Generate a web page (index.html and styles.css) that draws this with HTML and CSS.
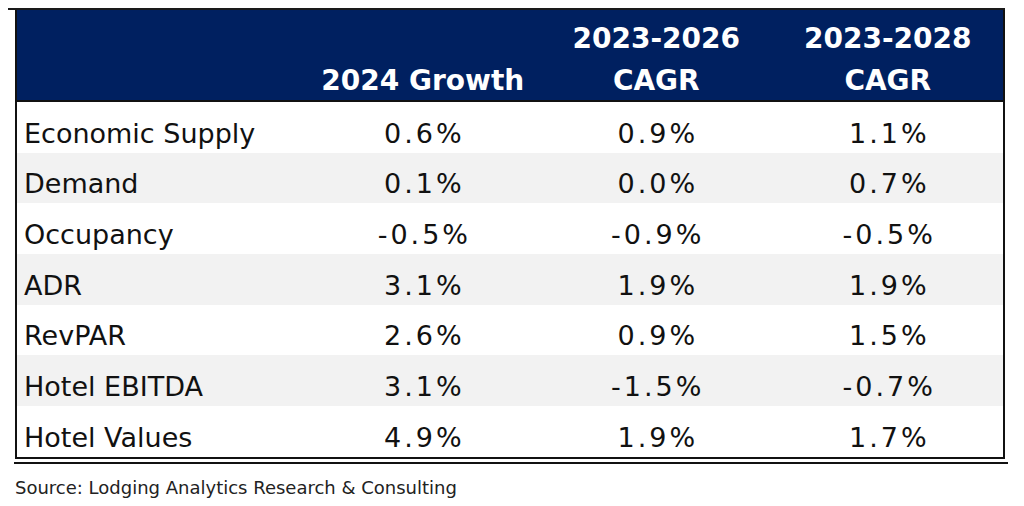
FILE: index.html
```html
<!DOCTYPE html>
<html>
<head>
<meta charset="utf-8">
<link rel="stylesheet" href="styles.css">
</head>
<body>
<div class="frame">
  <table class="data">
    <colgroup>
      <col class="c-label">
      <col class="c-val">
      <col class="c-val2">
      <col class="c-val3">
    </colgroup>
    <thead>
      <tr>
        <th></th>
        <th><span class="hl">2024 Growth</span></th>
        <th><span class="hl top">2023-2026</span><span class="hl">CAGR</span></th>
        <th><span class="hl top">2023-2028</span><span class="hl">CAGR</span></th>
      </tr>
    </thead>
    <tbody>
      <tr><td>Economic Supply</td><td>0.6%</td><td>0.9%</td><td>1.1%</td></tr>
      <tr class="alt"><td>Demand</td><td>0.1%</td><td>0.0%</td><td>0.7%</td></tr>
      <tr><td>Occupancy</td><td>-0.5%</td><td>-0.9%</td><td>-0.5%</td></tr>
      <tr class="alt"><td>ADR</td><td>3.1%</td><td>1.9%</td><td>1.9%</td></tr>
      <tr><td>RevPAR</td><td>2.6%</td><td>0.9%</td><td>1.5%</td></tr>
      <tr class="alt"><td>Hotel EBITDA</td><td>3.1%</td><td>-1.5%</td><td>-0.7%</td></tr>
      <tr><td>Hotel Values</td><td>4.9%</td><td>1.9%</td><td>1.7%</td></tr>
    </tbody>
  </table>
  <div class="rule"></div>
  <p class="source">Source: Lodging Analytics Research &amp; Consulting</p>
</div>
</body>
</html>
```

FILE: styles.css
```css
html, body {
  margin: 0;
  padding: 0;
  background: #ffffff;
}

body {
  font-family: "DejaVu Sans", "Liberation Sans", sans-serif;
  color: #111111;
}

.frame {
  margin: 8px 0 0 8px;
  width: 997px;
  border-top: 2px solid #1a1a1a;
}

.data {
  margin-left: 7px;
  width: 990px;
  border-collapse: collapse;
  table-layout: fixed;
  border: 2px solid #111111;
  border-top: none;
}

.c-label { width: 289px; }
.c-val { width: 234px; }
.c-val2 { width: 232px; }
.c-val3 { width: 231px; }

.data th {
  background: #002060;
  color: #ffffff;
  font-weight: bold;
  font-size: 28px;
  line-height: 25px;
  text-align: center;
  vertical-align: bottom;
  padding: 15.8px 0 7.2px;
  border-bottom: 2px solid #111111;
}

.hl {
  display: block;
}

.hl.top {
  margin-bottom: 17px;
}

.data td {
  font-size: 27px;
  line-height: 30px;
  padding: 16.6px 0 4.1px;
  text-align: center;
  vertical-align: top;
  background: #ffffff;
  letter-spacing: 3px;
  text-indent: 3px;
}

.data td:first-child {
  text-align: left;
  padding-left: 7px;
  letter-spacing: 0;
  text-indent: 0;
}

.data tr.alt td {
  background: #f2f2f2;
}

.rule {
  margin: 3px 0 0 6px;
  width: 994px;
  border-top: 2px solid #111111;
}

.source {
  margin: 13px 0 0 7px;
  font-size: 18px;
  line-height: 22px;
  color: #222222;
}
```
